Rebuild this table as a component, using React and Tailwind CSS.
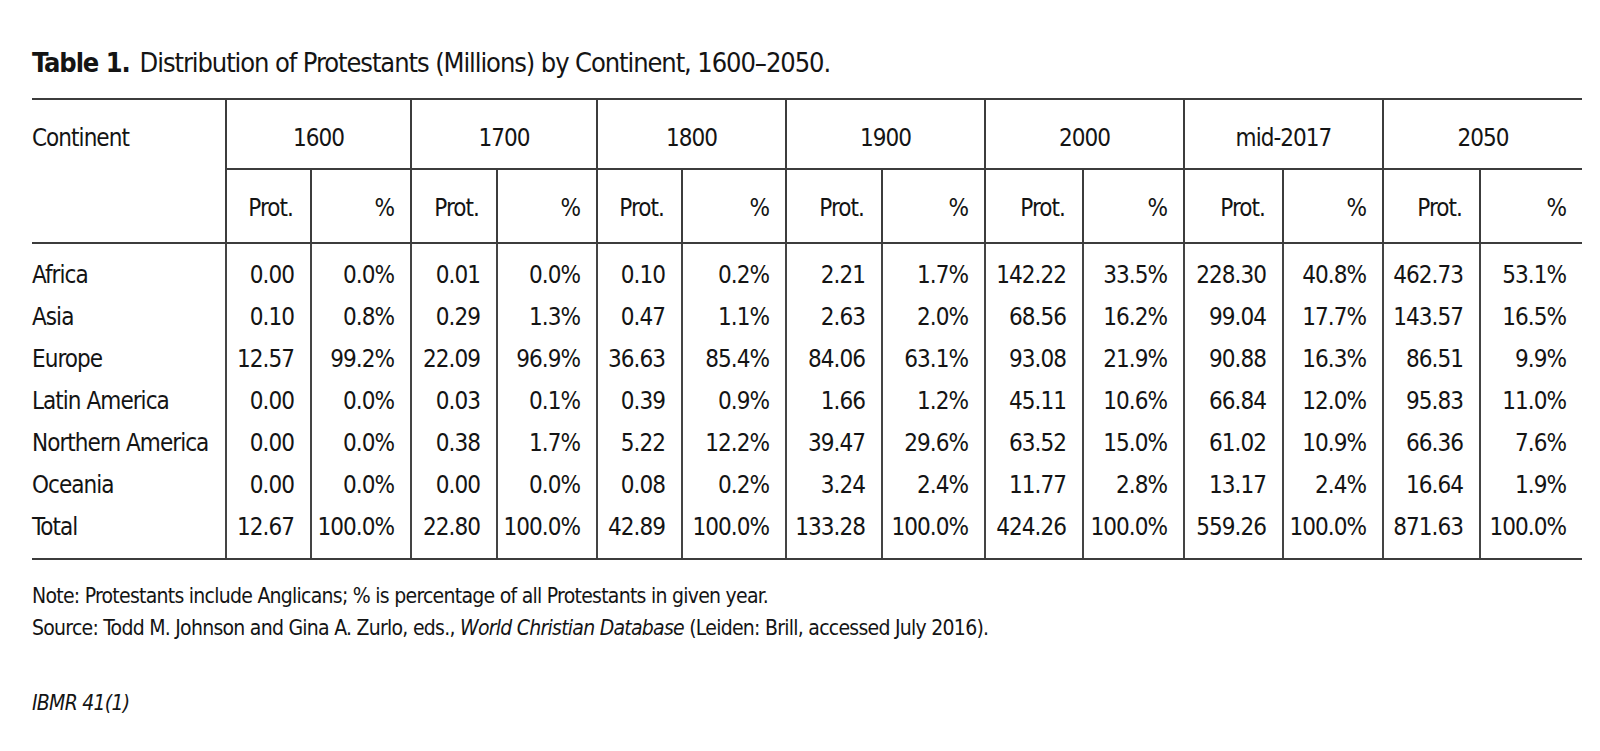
const years = ["1600", "1700", "1800", "1900", "2000", "mid-2017", "2050"];

const rows = [
  ["Africa", "0.00", "0.0%", "0.01", "0.0%", "0.10", "0.2%", "2.21", "1.7%", "142.22", "33.5%", "228.30", "40.8%", "462.73", "53.1%"],
  ["Asia", "0.10", "0.8%", "0.29", "1.3%", "0.47", "1.1%", "2.63", "2.0%", "68.56", "16.2%", "99.04", "17.7%", "143.57", "16.5%"],
  ["Europe", "12.57", "99.2%", "22.09", "96.9%", "36.63", "85.4%", "84.06", "63.1%", "93.08", "21.9%", "90.88", "16.3%", "86.51", "9.9%"],
  ["Latin America", "0.00", "0.0%", "0.03", "0.1%", "0.39", "0.9%", "1.66", "1.2%", "45.11", "10.6%", "66.84", "12.0%", "95.83", "11.0%"],
  ["Northern America", "0.00", "0.0%", "0.38", "1.7%", "5.22", "12.2%", "39.47", "29.6%", "63.52", "15.0%", "61.02", "10.9%", "66.36", "7.6%"],
  ["Oceania", "0.00", "0.0%", "0.00", "0.0%", "0.08", "0.2%", "3.24", "2.4%", "11.77", "2.8%", "13.17", "2.4%", "16.64", "1.9%"],
  ["Total", "12.67", "100.0%", "22.80", "100.0%", "42.89", "100.0%", "133.28", "100.0%", "424.26", "100.0%", "559.26", "100.0%", "871.63", "100.0%"],
];

export default function App() {
  return (
    <div className="min-h-screen bg-white pl-8 pt-[49px] font-['Liberation_Sans_Narrow','DejaVu_Sans_Condensed','Liberation_Sans',sans-serif] text-[#141414]">
      <h1 className="text-[27px] leading-[27px] tracking-[-0.04em]">
        <span className="font-bold">Table 1.</span>
        <span className="ml-[10px]">Distribution of Protestants (Millions) by Continent, 1600–2050.</span>
      </h1>

      <div className="mt-[22px] grid w-[1550px] grid-cols-[193px_85px_100px_86px_100px_85px_104px_96px_103px_98px_101px_99px_100px_97px_103px] border-y-2 border-[#3c3c3c] text-[24px] leading-[24px] tracking-[-0.04em]">
        <div className="row-span-2 border-b-2 border-[#3c3c3c] pt-[26px]">Continent</div>
        {years.map((y) => (
          <div key={y} className="col-span-2 h-[70px] border-b-2 border-l-2 border-[#3c3c3c] pt-[26px] text-center">
            {y}
          </div>
        ))}
        {years.map((y) => (
          <div key={y} className="contents">
            <div className="h-[74px] border-b-2 border-l-2 border-[#3c3c3c] pr-[17px] pt-[26px] text-right">Prot.</div>
            <div className="h-[74px] border-b-2 border-l-2 border-[#3c3c3c] pr-[16px] pt-[26px] text-right">%</div>
          </div>
        ))}

        {rows.map((row, r) =>
          row.map((cell, c) => (
            <div
              key={r + "-" + c}
              className={
                "flex items-center " +
                (r === 0 ? "h-[52px] pt-[10px] " : r === rows.length - 1 ? "h-[52px] pb-[10px] " : "h-[42px] ") +
                (c === 0 ? "justify-start" : "justify-end border-l-2 border-[#444444] pr-4")
              }
            >
              {cell}
            </div>
          ))
        )}
      </div>

      <div className="mt-[20px] text-[21px] leading-[32px] tracking-[-0.035em]">
        <p>Note: Protestants include Anglicans; % is percentage of all Protestants in given year.</p>
        <p>
          Source: Todd M. Johnson and Gina A. Zurlo, eds., <i>World Christian Database</i> (Leiden: Brill, accessed July 2016).
        </p>
        <p className="mt-[43px] italic">IBMR 41(1)</p>
      </div>
    </div>
  );
}
